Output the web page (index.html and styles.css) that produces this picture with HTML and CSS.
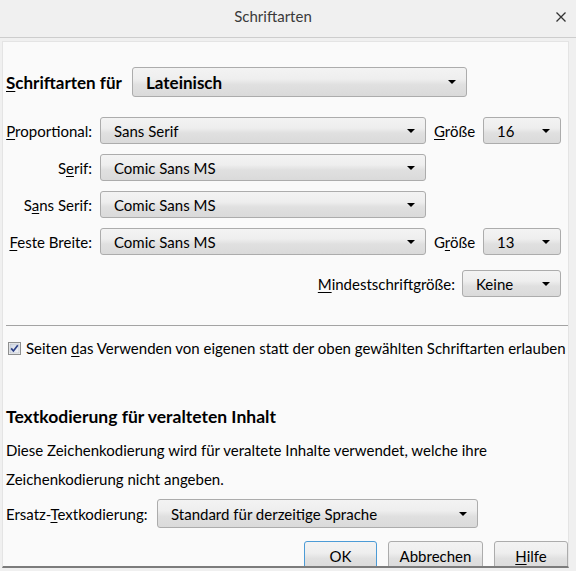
FILE: index.html
```html
<!DOCTYPE html>
<html lang="de">
<head>
<meta charset="utf-8">
<title>Schriftarten</title>
<link rel="stylesheet" href="styles.css">
</head>
<body>
<div class="window">
  <header class="titlebar">
    <span class="title">Schriftarten</span>
    <span class="close">
      <svg width="10" height="10" viewBox="0 0 10 10"><path d="M0.5 0.5 L9.5 9.5 M9.5 0.5 L0.5 9.5" stroke="#333" stroke-width="1.3" fill="none"/></svg>
    </span>
  </header>

  <main class="panel">
    <div class="lang-row">
      <span class="heading lang-label"><u>S</u>chriftarten für</span>
      <div class="select select-lang"><span>Lateinisch</span></div>
    </div>

    <div class="font-grid">
      <span class="lbl"><u>P</u>roportional:</span>
      <div class="select"><span>Sans Serif</span></div>
      <span class="size-lbl"><u>G</u>röße</span>
      <div class="select"><span>16</span></div>

      <span class="lbl">S<u>e</u>rif:</span>
      <div class="select"><span>Comic Sans MS</span></div>
      <span></span><span></span>

      <span class="lbl">S<u>a</u>ns Serif:</span>
      <div class="select"><span>Comic Sans MS</span></div>
      <span></span><span></span>

      <span class="lbl"><u>F</u>este Breite:</span>
      <div class="select"><span>Comic Sans MS</span></div>
      <span class="size-lbl">G<u>r</u>öße</span>
      <div class="select"><span>13</span></div>
    </div>

    <div class="min-row">
      <span class="min-label"><u>M</u>indestschriftgröße:</span>
      <div class="select select-min"><span>Keine</span></div>
    </div>

    <hr class="sep">

    <label class="check-row">
      <svg class="checkbox" width="13" height="13" viewBox="0 0 13 13">
        <defs>
          <linearGradient id="boxfill" x1="0" y1="0" x2="1" y2="1">
            <stop offset="0" stop-color="#cfd6e2"/>
            <stop offset="1" stop-color="#f4f5f8"/>
          </linearGradient>
        </defs>
        <rect x="0.5" y="0.5" width="12" height="12" fill="#f4f4f4" stroke="#8e8f8f"/>
        <rect x="2" y="2" width="9" height="9" fill="url(#boxfill)" stroke="#b3b8c4" stroke-width="0.6"/>
        <path d="M3.2 6.4 L5.4 9 L9.8 3.2" stroke="#2b3f86" stroke-width="1.7" fill="none"/>
      </svg>
      <span>Seiten <u>d</u>as Verwenden von eigenen statt der oben gewählten Schriftarten erlauben</span>
    </label>

    <h2 class="heading section-title">Textkodierung für veralteten Inhalt</h2>
    <p class="desc">Diese Zeichenkodierung wird für veraltete Inhalte verwendet, welche ihre Zeichenkodierung nicht angeben.</p>

    <div class="enc-row">
      <span class="enc-label">Ersatz-<u>T</u>extkodierung:</span>
      <div class="select select-enc"><span>Standard für derzeitige Sprache</span></div>
    </div>

    <div class="buttons">
      <button class="btn btn-default">OK</button>
      <button class="btn btn-cancel">Abbrechen</button>
      <button class="btn btn-help"><u>H</u>ilfe</button>
    </div>
  </main>
</div>
</body>
</html>
```

FILE: styles.css
```css
* {
  box-sizing: border-box;
}

body {
  margin: 0;
  background: #f0f0f0;
  font-family: Lato, "Liberation Sans", sans-serif;
  font-size: 15px;
  color: #000;
}

u {
  text-decoration: underline;
  text-decoration-thickness: 1px;
  text-underline-offset: 2px;
}

.window {
  width: 576px;
  height: 571px;
  background: #f0f0f0;
  overflow: hidden;
}

/* title bar */
.titlebar {
  height: 38px;
  padding-bottom: 5px;
  display: flex;
  align-items: center;
  border-bottom: 1px solid #cdcdcd;
}

.title {
  flex: 1;
  text-align: center;
  color: #3a3a3a;
  font-size: 15px;
}

.close {
  width: 30px;
  display: flex;
  justify-content: center;
  align-items: center;
  padding-top: 2px;
}

/* content panel */
.panel {
  display: block;
  margin: 3px 7px 0 2px;
  height: 527px;
  background: #fafafa;
  border: 1px solid #e4e4e4;
  border-bottom: 2px solid #7c7c7c;
  padding-left: 3px;
  overflow: hidden;
}

.heading {
  font-weight: bold;
  font-size: 17px;
}

/* combobox */
.select {
  height: 27px;
  display: flex;
  align-items: center;
  padding-left: 13px;
  border: 1px solid #acacac;
  border-radius: 3px;
  background: linear-gradient(to bottom, #f3f3f3 0%, #eeeeee 40%, #e0e0e0 60%, #dadada 100%);
  white-space: nowrap;
}

.select::after {
  content: "";
  margin-left: auto;
  margin-right: 10px;
  border-left: 4px solid transparent;
  border-right: 4px solid transparent;
  border-top: 4px solid #000;
}

.lang-row {
  display: flex;
  align-items: center;
  margin-top: 25px;
  height: 30px;
}

.lang-label {
  width: 126px;
}

.select-lang {
  width: 335px;
  height: 30px;
  font-weight: bold;
  font-size: 17px;
}

/* font family grid */
.font-grid {
  margin-top: 20px;
  display: grid;
  grid-template-columns: 94px 326px 57px 78px;
  grid-auto-rows: 27px;
  row-gap: 10px;
  align-items: center;
}

.lbl {
  text-align: right;
  padding-right: 8px;
}

.size-lbl {
  padding-left: 8px;
}

.min-row {
  width: 555px;
  margin-top: 15px;
  display: flex;
  justify-content: flex-end;
  align-items: center;
}

.min-label {
  margin-right: 7px;
}

.select-min {
  width: 99px;
}

.sep {
  margin: 28px 0 0 0;
  border: 0;
  border-top: 1px solid #a3a3a3;
  height: 0;
}

.check-row {
  margin-top: 12px;
  height: 20px;
  display: flex;
  align-items: center;
  white-space: nowrap;
}

.checkbox {
  margin-left: 2px;
  margin-right: 5px;
  flex: none;
}

.section-title {
  margin: 48px 0 0 0;
  line-height: 22px;
  font-size: 17.5px;
}

.desc {
  margin: 8px 0 0 0;
  line-height: 29px;
  padding-right: 6px;
}

.enc-row {
  margin-top: 5px;
  display: flex;
  align-items: center;
}

.enc-label {
  width: 151px;
}

.select-enc {
  width: 321px;
  height: 29px;
}

/* dialog buttons */
.buttons {
  margin-top: 13px;
  display: flex;
  justify-content: flex-end;
  gap: 11px;
}

.btn {
  height: 30px;
  font-family: inherit;
  font-size: 15px;
  color: #000;
  border: 1px solid #acacac;
  border-radius: 3px;
  background: linear-gradient(to bottom, #f3f3f3 0%, #eeeeee 40%, #e0e0e0 60%, #dadada 100%);
  padding: 0;
}

.btn-default {
  width: 73px;
  border-color: #4c9bd6;
}

.btn-cancel {
  width: 95px;
}

.btn-help {
  width: 74px;
}
```
